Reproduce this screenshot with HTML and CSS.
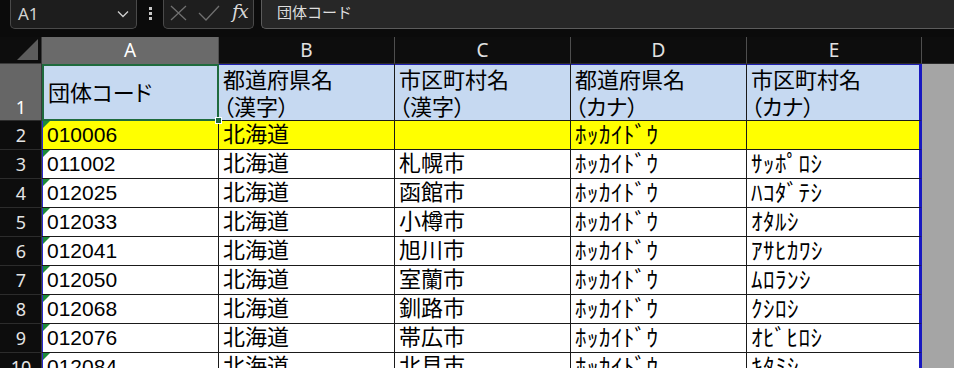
FILE: index.html
```html
<!DOCTYPE html>
<html lang="ja">
<head>
<meta charset="utf-8">
<title>Sheet</title>
<link rel="stylesheet" href="styles.css">
</head>
<body>
<div class="toolbar">
  <div class="namebox"><span>A1</span>
    <svg class="chev" width="12" height="8" viewBox="0 0 12 8"><path d="M1 1.5 L6 6.5 L11 1.5" fill="none" stroke="#cfcfcf" stroke-width="1.3"/></svg>
  </div>
  <div class="dots"><span></span><span></span><span></span></div>
  <div class="fxbox">
    <svg width="17" height="16" viewBox="0 0 17 16"><path d="M1 1 L16 15 M16 1 L1 15" stroke="#707070" stroke-width="1.3" fill="none"/></svg>
    <svg width="22" height="16" viewBox="0 0 22 16"><path d="M1 8 L8 15 L21 1" stroke="#707070" stroke-width="1.3" fill="none"/></svg>
    <span class="fx">fx</span>
  </div>
  <div class="formula">団体コード</div>
</div>

<div class="sheet">
  <div class="corner"><svg width="22" height="22" viewBox="0 0 22 22"><polygon points="21,0 21,21 0,21" fill="#5c5c5c"/></svg></div>
  <div class="ch sel">A</div>
  <div class="ch">B</div>
  <div class="ch">C</div>
  <div class="ch">D</div>
  <div class="ch">E</div>
  <div class="ch empty"></div>

  <div class="rh sel r1h">1</div>
  <div class="c h1 a1">団体コード</div>
  <div class="c h1 tb">都道府県名<br>（漢字）</div>
  <div class="c h1 tb">市区町村名<br>（漢字）</div>
  <div class="c h1 tb">都道府県名<br>（カナ）</div>
  <div class="c h1 tb e">市区町村名<br>（カナ）</div>
  <div class="g"></div>

  <div class="rh">2</div>
  <div class="c y a num">010006</div>
  <div class="c y">北海道</div>
  <div class="c y"></div>
  <div class="c y kana">ﾎｯｶｲﾄﾞｳ</div>
  <div class="c y e"></div>
  <div class="g"></div>

  <div class="rh">3</div>
  <div class="c a num">011002</div>
  <div class="c">北海道</div>
  <div class="c">札幌市</div>
  <div class="c kana">ﾎｯｶｲﾄﾞｳ</div>
  <div class="c kana e">ｻｯﾎﾟﾛｼ</div>
  <div class="g"></div>

  <div class="rh">4</div>
  <div class="c a num">012025</div>
  <div class="c">北海道</div>
  <div class="c">函館市</div>
  <div class="c kana">ﾎｯｶｲﾄﾞｳ</div>
  <div class="c kana e">ﾊｺﾀﾞﾃｼ</div>
  <div class="g"></div>

  <div class="rh">5</div>
  <div class="c a num">012033</div>
  <div class="c">北海道</div>
  <div class="c">小樽市</div>
  <div class="c kana">ﾎｯｶｲﾄﾞｳ</div>
  <div class="c kana e">ｵﾀﾙｼ</div>
  <div class="g"></div>

  <div class="rh">6</div>
  <div class="c a num">012041</div>
  <div class="c">北海道</div>
  <div class="c">旭川市</div>
  <div class="c kana">ﾎｯｶｲﾄﾞｳ</div>
  <div class="c kana e">ｱｻﾋｶﾜｼ</div>
  <div class="g"></div>

  <div class="rh">7</div>
  <div class="c a num">012050</div>
  <div class="c">北海道</div>
  <div class="c">室蘭市</div>
  <div class="c kana">ﾎｯｶｲﾄﾞｳ</div>
  <div class="c kana e">ﾑﾛﾗﾝｼ</div>
  <div class="g"></div>

  <div class="rh">8</div>
  <div class="c a num">012068</div>
  <div class="c">北海道</div>
  <div class="c">釧路市</div>
  <div class="c kana">ﾎｯｶｲﾄﾞｳ</div>
  <div class="c kana e">ｸｼﾛｼ</div>
  <div class="g"></div>

  <div class="rh">9</div>
  <div class="c a num">012076</div>
  <div class="c">北海道</div>
  <div class="c">帯広市</div>
  <div class="c kana">ﾎｯｶｲﾄﾞｳ</div>
  <div class="c kana e">ｵﾋﾞﾋﾛｼ</div>
  <div class="g"></div>

  <div class="rh">10</div>
  <div class="c a num">012084</div>
  <div class="c">北海道</div>
  <div class="c">北見市</div>
  <div class="c kana">ﾎｯｶｲﾄﾞｳ</div>
  <div class="c kana e">ｷﾀﾐｼ</div>
  <div class="g"></div>
</div>
</body>
</html>
```

FILE: styles.css
```css
html, body {
  margin: 0;
  padding: 0;
  background: #0b0b0b;
  width: 954px;
  height: 368px;
  overflow: hidden;
}

.toolbar {
  display: flex;
  height: 29px;
  align-items: stretch;
  font-family: "Noto Sans", "Noto Sans CJK JP", sans-serif;
}

.namebox {
  margin-left: 10px;
  width: 127px;
  box-sizing: border-box;
  background: #1d1d1d;
  border: 1px solid #4a4a4a;
  border-top: none;
  border-radius: 0 0 5px 5px;
  display: flex;
  align-items: center;
  justify-content: space-between;
  padding: 0 7px 0 7px;
  color: #d2d2d2;
  font-size: 17px;
}
.namebox span { margin-top: -2px; }
.chev { margin-top: -1px; }

.dots {
  width: 26px;
  display: flex;
  flex-direction: column;
  align-items: center;
  justify-content: center;
  gap: 2px;
  padding-bottom: 3px;
  box-sizing: border-box;
}
.dots span {
  width: 3px;
  height: 3px;
  background: #c8c8c8;
}

.fxbox {
  width: 91px;
  box-sizing: border-box;
  background: #1e1e1e;
  border: 1px solid #4a4a4a;
  border-top: none;
  border-radius: 0 0 5px 5px;
  display: flex;
  align-items: center;
  padding: 0 0 3px 6px;
  gap: 11px;
}
.fx {
  font-family: "DejaVu Serif", "Liberation Serif", serif;
  font-style: italic;
  font-size: 19px;
  color: #d8d8d8;
  margin-left: 1px;
  margin-top: -4px;
  letter-spacing: -1px;
}

.formula {
  margin-left: 7px;
  flex: 1;
  background: #272727;
  border: 1px solid #5c5c5c;
  border-top: none;
  border-right: none;
  border-radius: 0 0 0 5px;
  color: #dedede;
  font-size: 15px;
  padding-left: 15px;
  line-height: 24px;
}

.sheet {
  margin-top: 8px;
  display: grid;
  grid-template-columns: 42px 177px 176px 176px 176px 175px 32px;
  grid-template-rows: 27px 57px repeat(9, 29px);
  font-family: "Liberation Sans", "Noto Sans CJK JP", sans-serif;
}

.corner {
  background: #0d0d0d;
  border-right: 1px solid #3a3a3a;
  border-bottom: 1px solid #3a3a3a;
  display: flex;
  align-items: flex-end;
  justify-content: flex-end;
  padding: 0 2px 2px 0;
}

.ch {
  background: #0d0d0d;
  color: #e2e2e2;
  font-family: "Noto Sans", sans-serif;
  font-size: 19px;
  line-height: 26px;
  text-align: center;
  border-right: 1px solid #4e4e4e;
  border-bottom: 1px solid #2a2a2a;
}
.ch.sel {
  background: #6a6a6a;
  color: #ffffff;
  border-bottom: 1px solid #6a6a6a;
}
.ch.empty { border-right: none; }

.rh {
  background: #0d0d0d;
  color: #e4e4e4;
  font-family: "Noto Sans", sans-serif;
  font-size: 18px;
  line-height: 28px;
  text-align: center;
  border-right: 1px solid #3a3a3a;
  border-bottom: 1px solid #2c2c2c;
  padding-left: 1px;
}
.rh.sel {
  background: #666666;
  color: #ffffff;
}
.r1h {
  display: flex;
  align-items: flex-end;
  justify-content: center;
  line-height: 26px;
}

.c {
  position: relative;
  background: #ffffff;
  color: #000000;
  font-size: 22px;
  line-height: 28px;
  padding-left: 4px;
  border-right: 1px solid #1a1a1a;
  border-bottom: 1px solid #1a1a1a;
  white-space: nowrap;
  overflow: hidden;
}
.c.num {
  font-size: 21px;
  padding-left: 5px;
}
.c.kana {
  font-size: 23px;
  letter-spacing: 0.5px;
}
.c.y { background: #ffff00; }

.h1 {
  background: #c6d9f1;
  line-height: 27px;
  display: flex;
  align-items: center;
  padding-top: 3px;
  box-sizing: border-box;
  font-feature-settings: "palt";
}
.h1.tb { box-shadow: inset 0 1px 0 #1f1fb0; }
.h1.a1 {
  padding-left: 6px;
  padding-top: 2px;
  overflow: visible;
  z-index: 2;
}
.a1::after {
  content: "";
  position: absolute;
  left: 0;
  top: 0;
  right: -1px;
  bottom: -1px;
  border: 2px solid #1f6b3e;
}
.a1::before {
  content: "";
  position: absolute;
  right: -4px;
  bottom: -4px;
  width: 5px;
  height: 5px;
  background: #1f6b3e;
  border: 1px solid #ffffff;
  z-index: 3;
}

.c.a { box-shadow: inset 1px 0 0 #2b2bd0; }
.c.a::before {
  content: "";
  position: absolute;
  left: 1px;
  top: 0;
  border-top: 7px solid #1c8a3a;
  border-right: 7px solid transparent;
}

.c.e { border-right: 3px solid #1818c0; }
.h1.tb.e { box-shadow: inset 0 1px 0 #1f1fb0; }

.g {
  background: #a5a5a5;
}
```
